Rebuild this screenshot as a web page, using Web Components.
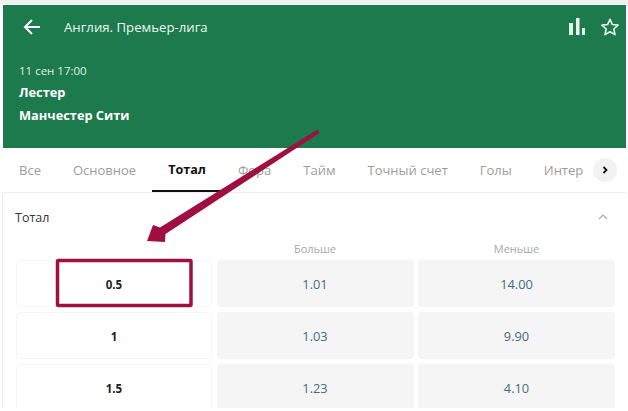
<!DOCTYPE html>
<html lang="ru">
<head>
<meta charset="utf-8">
<style>
  html, body { margin: 0; height: 100%; background: #fff; overflow: hidden; }
  body { font-family: "Open Sans", "Noto Sans", sans-serif; }
</style>
</head>
<body>
<match-page>
  <match-header league="Англия. Премьер-лига" time="11 сен 17:00">
    <span>Лестер</span>
    <span>Манчестер Сити</span>
  </match-header>
  <market-tabs>
    <market-tab>Все</market-tab>
    <market-tab>Основное</market-tab>
    <market-tab active>Тотал</market-tab>
    <market-tab>Фора</market-tab>
    <market-tab>Тайм</market-tab>
    <market-tab>Точный счет</market-tab>
    <market-tab>Голы</market-tab>
    <market-tab>Интер</market-tab>
  </market-tabs>
  <market-section title="Тотал">
    <odds-row total="0.5" over="1.01" under="14.00"></odds-row>
    <odds-row total="1" over="1.03" under="9.90"></odds-row>
    <odds-row total="1.5" over="1.23" under="4.10"></odds-row>
  </market-section>
</match-page>
<arrow-note></arrow-note>

<script>
  class MatchPage extends HTMLElement {
    connectedCallback() {
      this.attachShadow({ mode: 'open' });
      this.shadowRoot.innerHTML = `
        <style>
          :host {
            display: flex;
            flex-direction: column;
            height: 408px;
            padding: 5px 2px 0 3px;
            box-sizing: border-box;
            overflow: hidden;
            background: linear-gradient(#eef1ef 0 4px, #fff 4px);
          }
        </style>
        <slot></slot>
      `;
    }
  }
  customElements.define('match-page', MatchPage);

  class MatchHeader extends HTMLElement {
    connectedCallback() {
      this.attachShadow({ mode: 'open' });
      this.shadowRoot.innerHTML = `
        <style>
          :host {
            display: block;
            flex: none;
            height: 143px;
            box-sizing: border-box;
            background: #1c7a4c;
            color: #fff;
            padding: 0 6px 0 16px;
          }
          .top {
            display: flex;
            align-items: center;
            height: 44px;
          }
          .back { width: 20px; height: 20px; margin: 0 22px 0 3px; }
          .league { font-size: 13.2px; flex: 1; color: #eef7f1; }
          .stats { width: 18px; height: 18px; margin-right: 14px; }
          .star { width: 20px; height: 20px; margin-top: -1px; }
          .time { font-size: 11.5px; margin-top: 14px; line-height: 16px; color: #dff0e6; }
          .teams { display: flex; flex-direction: column; margin-top: 5px; gap: 6px;
                   font-size: 12.8px; font-weight: 700; line-height: 17px; }
        </style>
        <div class="top">
          <svg class="back" viewBox="0 0 20 20" fill="none" stroke="#fff" stroke-width="2">
            <path d="M18 10H3M10 3l-7 7 7 7"/>
          </svg>
          <span class="league">${this.getAttribute('league')}</span>
          <svg class="stats" viewBox="0 0 18 18" fill="#e6f5ec">
            <rect x="1" y="5" width="4" height="12"/>
            <rect x="8" y="0" width="3.500" height="17"/>
            <rect x="14" y="10" width="3" height="7"/>
          </svg>
          <svg class="star" viewBox="0 0 22 22" fill="none" stroke="#e6f5ec" stroke-width="1.800" stroke-linejoin="round">
            <path d="M11 2.500l2.600 5.800 6.300.7-4.700 4.200 1.300 6.200-5.500-3.200-5.500 3.200 1.300-6.200L2.100 9l6.300-.7z"/>
          </svg>
        </div>
        <div class="time">${this.getAttribute('time')}</div>
        <div class="teams"><slot></slot></div>
      `;
    }
  }
  customElements.define('match-header', MatchHeader);

  class MarketTabs extends HTMLElement {
    connectedCallback() {
      this.attachShadow({ mode: 'open' });
      this.shadowRoot.innerHTML = `
        <style>
          :host {
            display: flex;
            flex: none;
            position: relative;
            height: 45px;
            box-sizing: border-box;
            border-bottom: 1px solid #eeeeee;
            overflow: hidden;
          }
          .more {
            position: absolute;
            right: 9px;
            top: 10px;
            width: 24px;
            height: 24px;
            border-radius: 50%;
            background: #f2f2f2;
            display: flex;
            align-items: center;
            justify-content: center;
          }
          svg { width: 8px; height: 8px; }
        </style>
        <slot></slot>
        <div class="more">
          <svg viewBox="0 0 8 8" fill="none" stroke="#111" stroke-width="1.800"><path d="M2.500 1l3 3-3 3"/></svg>
        </div>
      `;
    }
  }
  customElements.define('market-tabs', MarketTabs);

  class MarketTab extends HTMLElement {
    connectedCallback() {
      this.attachShadow({ mode: 'open' });
      this.shadowRoot.innerHTML = `
        <style>
          :host {
            display: flex;
            align-items: center;
            justify-content: center;
            flex: none;
            padding: 0 16px;
            box-sizing: border-box;
            height: 44px;
            font-size: 13px;
            color: #9d9d9d;
          }
          :host([active]) {
            color: #111;
            font-weight: 700;
            font-size: 12.600px;
            border-bottom: 2px solid #111;
          }
        </style>
        <slot></slot>
      `;
    }
  }
  customElements.define('market-tab', MarketTab);

  class MarketSection extends HTMLElement {
    connectedCallback() {
      this.attachShadow({ mode: 'open' });
      this.shadowRoot.innerHTML = `
        <style>
          :host {
            display: block;
            flex: 1;
            padding: 0 11px 0 13px;
            border-left: 1px solid #eeeeee;
            margin-left: -1px;
            margin-right: 1px;
          }
          .head {
            display: flex;
            justify-content: space-between;
            align-items: center;
            height: 48px;
            font-size: 12.500px;
            color: #333;
          }
          .head span { margin-left: -1px; }
          .head svg { width: 12px; height: 8px; margin-right: 5px; }
          .cols {
            display: grid;
            grid-template-columns: 196px 197px 197px;
            gap: 0 4.500px;
            height: 17px;
            padding-bottom: 3px;
            margin-top: -1px;
            align-items: center;
            font-size: 11px;
            color: #a8a8a8;
            text-align: center;
          }
          .rows { display: flex; flex-direction: column; gap: 5px; }
        </style>
        <div class="head">
          <span>${this.getAttribute('title')}</span>
          <svg viewBox="0 0 12 8" fill="none" stroke="#aaa" stroke-width="1.200"><path d="M2 6l4-4 4 4"/></svg>
        </div>
        <div class="cols"><span></span><span>Больше</span><span>Меньше</span></div>
        <div class="rows"><slot></slot></div>
      `;
    }
  }
  customElements.define('market-section', MarketSection);

  class OddsRow extends HTMLElement {
    connectedCallback() {
      this.attachShadow({ mode: 'open' });
      this.shadowRoot.innerHTML = `
        <style>
          :host {
            display: grid;
            grid-template-columns: 196px 197px 197px;
            gap: 0 4.500px;
            height: 47px;
          }
          div {
            display: flex;
            align-items: center;
            justify-content: center;
            border-radius: 4px;
            font-size: 12.800px;
            padding-top: 1px;
            box-sizing: border-box;
            background: #f5f5f5;
            color: #456c78;
          }
          .total {
            background: #fff;
            border: 1px solid #f6f6f6;
            color: #222;
            font-size: 11.500px;
            font-weight: 700;
            font-family: "Noto Sans", sans-serif;
          }
        </style>
        <div class="total">${this.getAttribute('total')}</div>
        <div>${this.getAttribute('over')}</div>
        <div>${this.getAttribute('under')}</div>
      `;
    }
  }
  customElements.define('odds-row', OddsRow);

  // red annotation drawn over the screenshot: arrow plus the box round 0.5
  class ArrowNote extends HTMLElement {
    connectedCallback() {
      this.attachShadow({ mode: 'open' });
      this.shadowRoot.innerHTML = `
        <style>
          :host { position: absolute; inset: 0; display: block; pointer-events: none; }
          svg { position: absolute; left: 0; top: 0; }
        </style>
        <svg width="628" height="411" viewBox="0 0 628 411">
          <path d="M317.500 129.500L319.500 133 165.500 234 165 242 147 241 153 225 160 227.500Z" fill="#9f1040"/>
          <rect x="57.500" y="260.500" width="133.500" height="45" rx="1" fill="none" stroke="#9f1040" stroke-width="3.500"/>
        </svg>
      `;
    }
  }
  customElements.define('arrow-note', ArrowNote);
</script>
</body>
</html>
